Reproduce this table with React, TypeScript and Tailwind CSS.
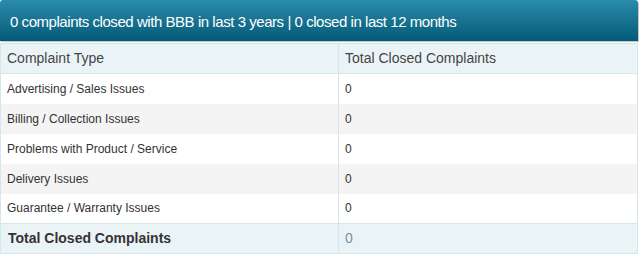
const rows = [
  "Advertising / Sales Issues",
  "Billing / Collection Issues",
  "Problems with Product / Service",
  "Delivery Issues",
  "Guarantee / Warranty Issues",
]

export default function App() {
  return (
    <div className="w-[639px] h-[255px] bg-white font-['Liberation_Sans',Arial,sans-serif]">
      <div className="w-[638px]">
        {/* header bar */}
        <div className="h-[41px] rounded-t-[3px] bg-gradient-to-b from-[#2a8cab] to-[#025a77] shadow-[1px_1px_1px_rgba(0,0,0,0.25)] flex items-center pl-[10px] pt-[3px] text-[15px] text-white tracking-[-0.45px]">
          0 complaints closed with BBB in last 3 years | 0 closed in last 12 months
        </div>

        <table className="mt-[2px] w-[638px] border-collapse border border-[#d4e7ed] table-fixed">
          <thead>
            <tr className="h-[30px] bg-[#eaf4f7] text-[14px] text-[#444]">
              <th className="w-[338px] border border-[#d4e7ed] text-left font-normal pl-[6px]">Complaint Type</th>
              <th className="border border-[#d4e7ed] text-left font-normal pl-[6px]">Total Closed Complaints</th>
            </tr>
          </thead>
          <tbody className="text-[12px] text-[#333]">
            {rows.map((r, i) => (
              <tr key={r} className={`h-[30px] ${i % 2 === 1 ? "bg-[#f4f4f4]" : "bg-white"}`}>
                <td className="border-x border-[#d4e7ed] pl-[6px]">{r}</td>
                <td className="border-x border-[#d4e7ed] pl-[6px]">0</td>
              </tr>
            ))}
            <tr className="h-[30px] bg-[#eaf4f7]">
              <td className="border border-[#d4e7ed] pl-[7px] text-[14px] font-bold text-[#333]">Total Closed Complaints</td>
              <td className="border border-[#d4e7ed] pl-[6px] text-[14px] text-[#6f93a6]">0</td>
            </tr>
          </tbody>
        </table>
      </div>
    </div>
  )
}
